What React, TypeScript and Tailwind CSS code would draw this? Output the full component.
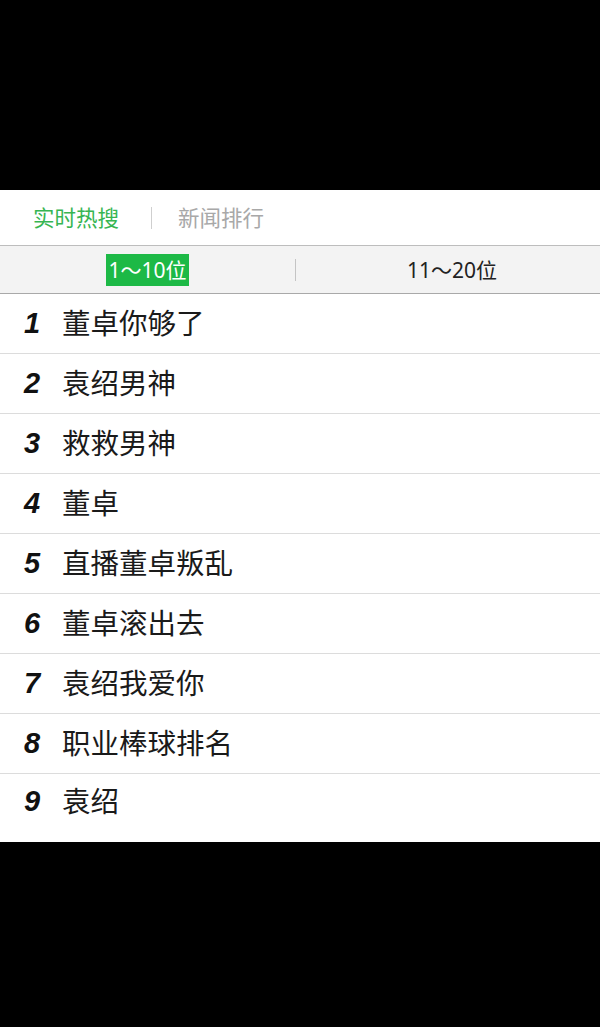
import React from 'react';

const items = [
  '董卓你够了',
  '袁绍男神',
  '救救男神',
  '董卓',
  '直播董卓叛乱',
  '董卓滚出去',
  '袁绍我爱你',
  '职业棒球排名',
  '袁绍',
];

const font = { fontFamily: '"Noto Sans", "Noto Sans CJK SC", sans-serif' };

export default function App() {
  return (
    <div className="min-h-screen bg-black flex flex-col" style={font}>
      <div className="h-[190px] shrink-0" />
      <div className="bg-white">
        {/* top tabs */}
        <div className="h-[56px] flex items-center pl-[33px] border-b border-[#bdbdbd]">
          <span className="text-[21.5px] text-[#37b552] leading-none">实时热搜</span>
          <span className="ml-[32px] mr-[26px] w-px h-[22px] bg-[#cfcfcf]" />
          <span className="text-[21.5px] text-[#a8a8a8] leading-none">新闻排行</span>
        </div>
        {/* range tabs */}
        <div className="h-[48px] flex items-center bg-[#f3f3f3] border-b border-[#a9a9a9]">
          <div className="w-[295px] flex justify-center">
            <span className="bg-[#1db946] text-white text-[21px] leading-[32px] px-[2px]">1～10位</span>
          </div>
          <span className="w-px h-[22px] bg-[#c4c4c4]" />
          <div className="flex-1 flex justify-center pl-[8px]">
            <span className="text-[#222] text-[21px] leading-[32px]">11～20位</span>
          </div>
        </div>
        {/* list */}
        {items.map((t, i) => (
          <div
            key={i}
            className={
              i === items.length - 1
                ? 'h-[68px] flex items-start pt-[13px]'
                : 'h-[60px] flex items-center border-b border-[#dcdcdc]'
            }
          >
            <span
              className="w-[62px] pl-[24px] text-[29px] font-bold italic text-[#111] leading-none"
              style={{ fontFamily: '"Liberation Sans", "Noto Sans", sans-serif' }}
            >
              {i + 1}
            </span>
            <span className="text-[28.5px] text-[#1a1a1a] leading-none">{t}</span>
          </div>
        ))}
      </div>
      <div className="flex-1" />
    </div>
  );
}
